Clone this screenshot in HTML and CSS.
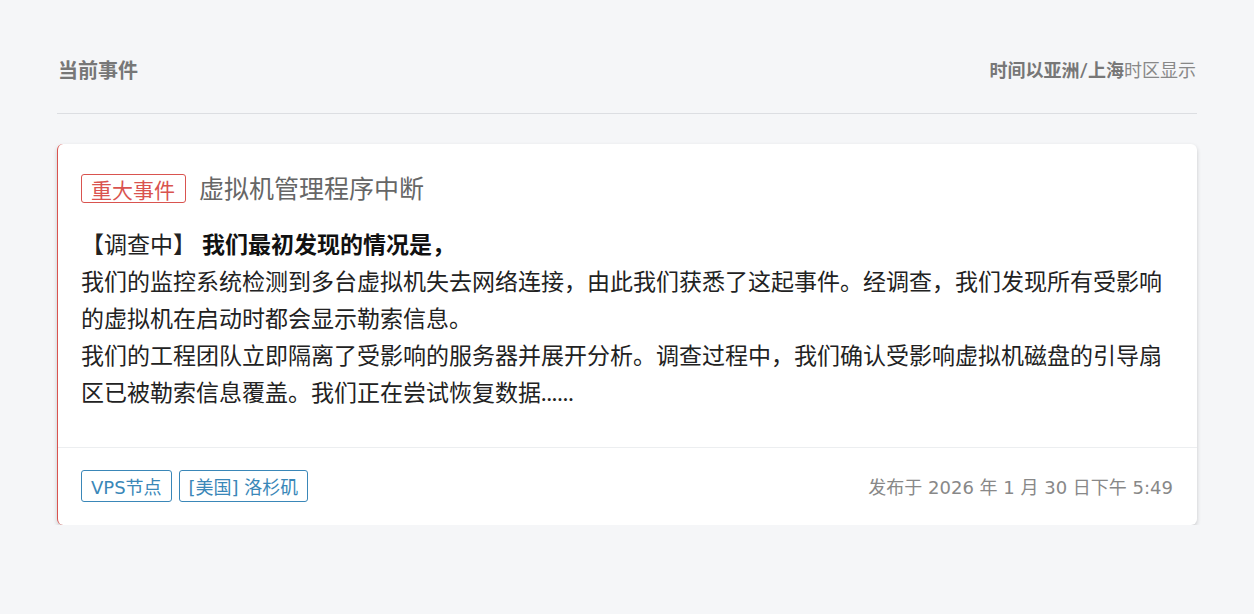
FILE: index.html
```html
<!DOCTYPE html>
<html lang="zh-CN">
<head>
<meta charset="utf-8">
<title>当前事件</title>
<link rel="stylesheet" href="styles.css">
</head>
<body>
<div class="page">
  <header class="page-header">
    <h2 class="page-title">当前事件</h2>
    <div class="tz"><strong>时间以亚洲/上海</strong>时区显示</div>
  </header>
  <section class="incident">
    <div class="incident-body">
      <div class="incident-head">
        <span class="badge-major">重大事件</span>
        <h3 class="incident-title">虚拟机管理程序中断</h3>
      </div>
      <div class="incident-text">
        <p><span class="status">【调查中】</span> <strong>我们最初发现的情况是，</strong></p>
        <p>我们的监控系统检测到多台虚拟机失去网络连接，由此我们获悉了这起事件。经调查，我们发现所有受影响的虚拟机在启动时都会显示勒索信息。</p>
        <p>我们的工程团队立即隔离了受影响的服务器并展开分析。调查过程中，我们确认受影响虚拟机磁盘的引导扇区已被勒索信息覆盖。我们正在尝试恢复数据......</p>
      </div>
    </div>
    <div class="incident-foot">
      <div class="tags">
        <span class="tag">VPS节点</span>
        <span class="tag">[美国] 洛杉矶</span>
      </div>
      <div class="published">发布于 2026 年 1 月 30 日下午 5:49</div>
    </div>
  </section>
</div>
</body>
</html>
```

FILE: styles.css
```css
* { box-sizing: border-box; }
html, body {
  margin: 0;
  padding: 0;
  background: #f5f6f8;
}
body {
  font-family: Lato, "Noto Sans CJK SC", sans-serif;
  color: #222;
}
.page {
  width: 1140px;
  margin-left: 57px;
  padding-top: 56px;
}
.page-header {
  display: flex;
  justify-content: space-between;
  align-items: flex-start;
  height: 58px;
  padding: 0 1px;
  border-bottom: 1px solid #dcdee2;
}
.page-title {
  margin: 0;
  font-size: 20px;
  line-height: 28px;
  font-weight: 700;
  color: #777;
}
.tz {
  font-size: 18px;
  line-height: 28px;
  color: #888;
}
.tz strong {
  color: #777;
  font-weight: 700;
}
.incident {
  margin-top: 30px;
  background: #fff;
  border-left: 1px solid #d9534f;
  border-radius: 6px;
  box-shadow: 0 2px 4px rgba(0, 0, 0, 0.18);
}
.incident-body {
  padding: 30px 24px 36px 23px;
  border-bottom: 1px solid #eceef0;
}
.incident-head {
  display: flex;
  align-items: center;
  gap: 13px;
  height: 29px;
}
.badge-major {
  display: inline-flex;
  align-items: center;
  height: 29px;
  padding: 0 10px 0 9px;
  font-size: 21px;
  color: #d9534f;
  border: 1px solid #d9534f;
  border-radius: 3px;
}
.incident-title {
  margin: 0;
  font-size: 25px;
  font-weight: 400;
  color: #666;
  line-height: 29px;
}
.incident-text {
  margin-top: 23px;
  font-size: 23px;
  line-height: 37px;
  color: #222;
}
.incident-text p {
  margin: 0;
}
.incident-text strong {
  font-weight: 700;
  color: #111;
}
.incident-foot {
  display: flex;
  justify-content: space-between;
  align-items: center;
  padding: 22px 24px 23px 23px;
  font-family: "DejaVu Sans", "Noto Sans CJK SC", sans-serif;
}
.tags {
  display: flex;
  gap: 7px;
}
.tag {
  display: inline-flex;
  align-items: center;
  height: 32px;
  padding: 0 9px;
  font-size: 18px;
  color: #3a87b8;
  border: 1px solid #3a87b8;
  border-radius: 3px;
}
.published {
  font-size: 18px;
  color: #888;
}
```
